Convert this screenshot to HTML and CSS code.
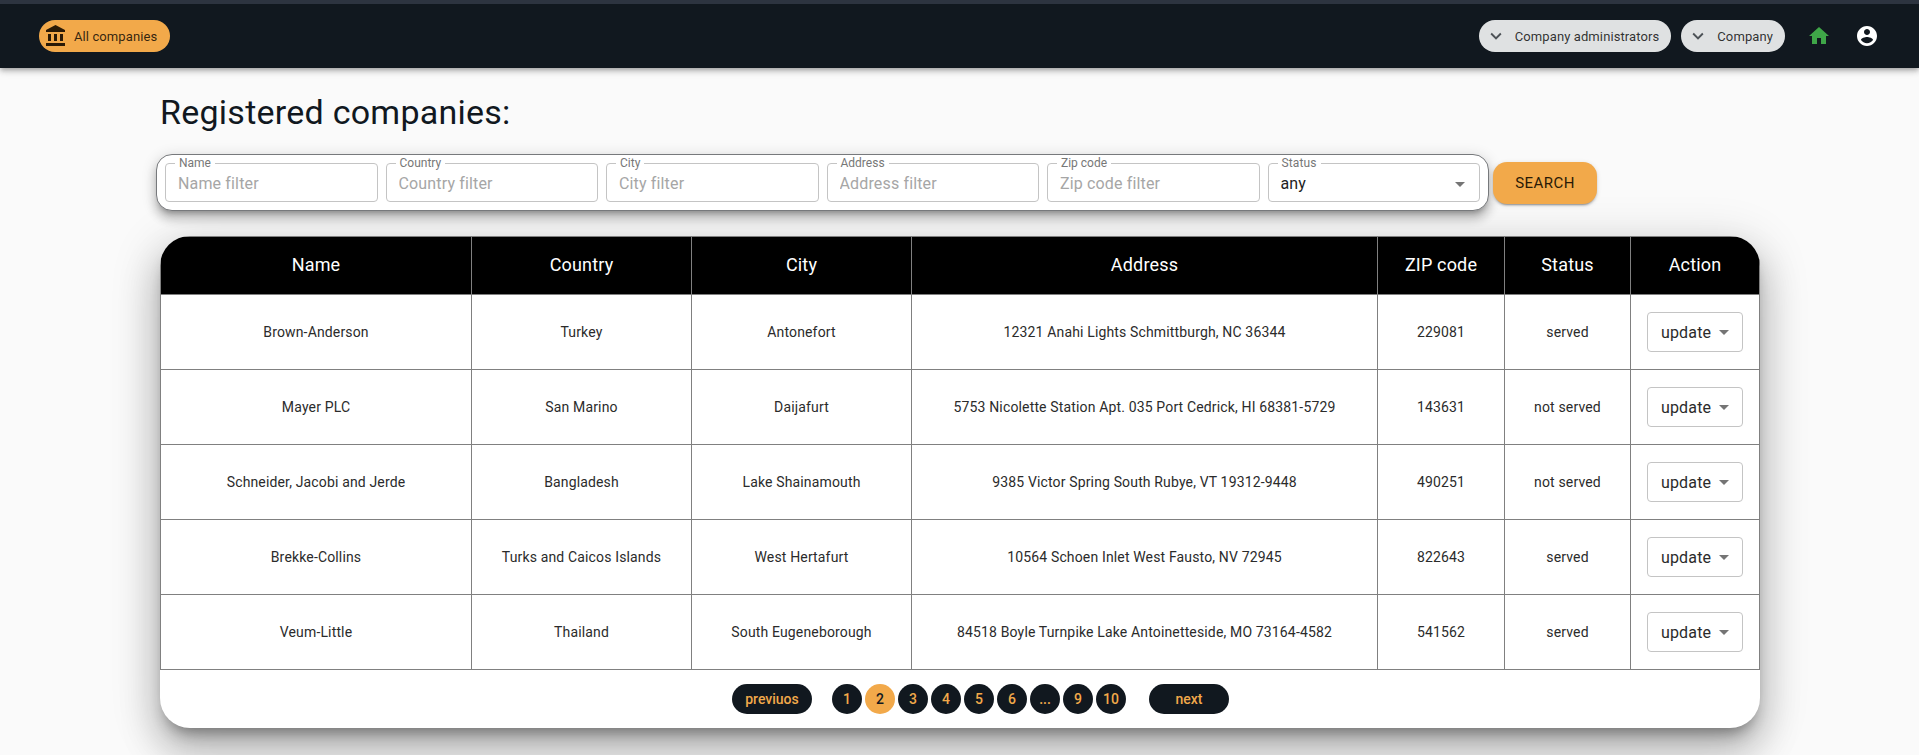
FILE: index.html
```html
<!DOCTYPE html>
<html lang="en">
<head>
    <meta charset="UTF-8">
    <meta name="viewport" content="width=device-width, initial-scale=1.0">
    <title>Registered companies</title>
    <link rel="stylesheet" href="styles.css">
</head>
<body>
    <header class="topbar">
        <a class="chip chip-orange">
            <svg class="chip-bank" viewBox="0 0 24 24"><path d="M4 10v7h3v-7H4zm6 0v7h3v-7h-3zM2 22h19v-3H2v3zm14-12v7h3v-7h-3zm-4.5-9L2 6v2h19V6l-9.5-5z"/></svg>
            <span>All companies</span>
        </a>
        <div class="topbar-right">
            <a class="chip chip-grey">
                <svg class="chip-arrow" viewBox="0 0 24 24"><path d="M16.59 8.59L12 13.17 7.41 8.59 6 10l6 6 6-6z"/></svg>
                <span>Company administrators</span>
            </a>
            <a class="chip chip-grey">
                <svg class="chip-arrow" viewBox="0 0 24 24"><path d="M16.59 8.59L12 13.17 7.41 8.59 6 10l6 6 6-6z"/></svg>
                <span>Company</span>
            </a>
            <svg class="icon-home" viewBox="0 0 24 24"><path d="M10 20v-6h4v6h5v-8h3L12 3 2 12h3v8z"/></svg>
            <svg class="icon-user" viewBox="0 0 24 24"><path d="M12 2C6.48 2 2 6.48 2 12s4.48 10 10 10 10-4.48 10-10S17.52 2 12 2zm0 3c1.66 0 3 1.34 3 3s-1.34 3-3 3-3-1.34-3-3 1.34-3 3-3zm0 14.2c-2.5 0-4.71-1.28-6-3.22.03-1.99 4-3.08 6-3.08 1.99 0 5.97 1.09 6 3.08-1.29 1.94-3.5 3.22-6 3.22z"/></svg>
        </div>
    </header>

    <main class="content">
        <h1>Registered companies:</h1>

        <div class="filters-row">
            <div class="filters">
                <div class="field"><label>Name</label><input type="text" placeholder="Name filter"></div>
                <div class="field"><label>Country</label><input type="text" placeholder="Country filter"></div>
                <div class="field"><label>City</label><input type="text" placeholder="City filter"></div>
                <div class="field"><label>Address</label><input type="text" placeholder="Address filter"></div>
                <div class="field"><label>Zip code</label><input type="text" placeholder="Zip code filter"></div>
                <div class="field field-select">
                    <label>Status</label>
                    <span>any</span>
                    <svg class="drop" viewBox="0 0 24 24"><path d="M7 10l5 5 5-5z"/></svg>
                </div>
            </div>
            <button class="search">Search</button>
        </div>

        <div class="card">
            <table>
                <colgroup>
                    <col class="col-name"><col class="col-country"><col class="col-city"><col class="col-address">
                    <col class="col-zip"><col class="col-status"><col class="col-action">
                </colgroup>
                <thead>
                    <tr><th>Name</th><th>Country</th><th>City</th><th>Address</th><th>ZIP code</th><th>Status</th><th>Action</th></tr>
                </thead>
                <tbody>
                    <tr>
                        <td>Brown-Anderson</td><td>Turkey</td><td>Antonefort</td>
                        <td>12321 Anahi Lights Schmittburgh, NC 36344</td><td>229081</td><td>served</td>
                        <td><div class="update">update <svg class="drop" viewBox="0 0 24 24"><path d="M7 10l5 5 5-5z"/></svg></div></td>
                    </tr>
                    <tr>
                        <td>Mayer PLC</td><td>San Marino</td><td>Daijafurt</td>
                        <td>5753 Nicolette Station Apt. 035 Port Cedrick, HI 68381-5729</td><td>143631</td><td>not served</td>
                        <td><div class="update">update <svg class="drop" viewBox="0 0 24 24"><path d="M7 10l5 5 5-5z"/></svg></div></td>
                    </tr>
                    <tr>
                        <td>Schneider, Jacobi and Jerde</td><td>Bangladesh</td><td>Lake Shainamouth</td>
                        <td>9385 Victor Spring South Rubye, VT 19312-9448</td><td>490251</td><td>not served</td>
                        <td><div class="update">update <svg class="drop" viewBox="0 0 24 24"><path d="M7 10l5 5 5-5z"/></svg></div></td>
                    </tr>
                    <tr>
                        <td>Brekke-Collins</td><td>Turks and Caicos Islands</td><td>West Hertafurt</td>
                        <td>10564 Schoen Inlet West Fausto, NV 72945</td><td>822643</td><td>served</td>
                        <td><div class="update">update <svg class="drop" viewBox="0 0 24 24"><path d="M7 10l5 5 5-5z"/></svg></div></td>
                    </tr>
                    <tr>
                        <td>Veum-Little</td><td>Thailand</td><td>South Eugeneborough</td>
                        <td>84518 Boyle Turnpike Lake Antoinetteside, MO 73164-4582</td><td>541562</td><td>served</td>
                        <td><div class="update">update <svg class="drop" viewBox="0 0 24 24"><path d="M7 10l5 5 5-5z"/></svg></div></td>
                    </tr>
                </tbody>
            </table>

            <div class="pager">
                <a class="page-wide">previuos</a>
                <div class="pages">
                    <a>1</a>
                    <a class="active">2</a>
                    <a>3</a>
                    <a>4</a>
                    <a>5</a>
                    <a>6</a>
                    <a>...</a>
                    <a>9</a>
                    <a>10</a>
                </div>
                <a class="page-wide">next</a>
            </div>
        </div>
    </main>
</body>
</html>
```

FILE: styles.css
```css
* {
    box-sizing: border-box;
}

html, body {
    height: 100%;
}

body {
    margin: 0;
    background-color: #fafafa;
    font-family: Roboto, "Liberation Sans", sans-serif;
    color: #11181f;
    overflow: hidden;
}

/* top bar */
.topbar {
    position: relative;
    height: 68px;
    border-top: 4px solid #2d3440;
    background: #11181f;
    padding: 0 40px 0 39px;
    display: flex;
    align-items: center;
    justify-content: space-between;
    box-shadow: 0 2px 4px -1px rgba(0, 0, 0, 0.2), 0 4px 5px 0 rgba(0, 0, 0, 0.14), 0 1px 10px 0 rgba(0, 0, 0, 0.12);
}

.topbar-right {
    display: flex;
    align-items: center;
}

.chip {
    height: 32px;
    border-radius: 16px;
    display: flex;
    align-items: center;
    font-size: 13px;
    letter-spacing: 0.1px;
    color: rgba(0, 0, 0, 0.8);
}

.chip-orange {
    width: 131px;
    padding-left: 5px;
    background: #f2a94a;
}

.chip-bank {
    width: 24px;
    height: 24px;
    margin-right: 6px;
    fill: #2a1a06;
}

.chip-grey {
    background: #dfe1e2;
    padding: 0 12px 0 6px;
    margin-right: 10px;
}

.chip-arrow {
    width: 22px;
    height: 22px;
    margin-right: 8px;
    fill: #4d5257;
}

.icon-home {
    width: 24px;
    height: 24px;
    margin-left: 12px;
    fill: #3fa648;
}

.icon-user {
    width: 24px;
    height: 24px;
    margin-left: 24px;
    fill: #fff;
}

/* main */
.content {
    width: 1600px;
    margin-left: 160px;
}

h1 {
    margin: 0;
    padding-top: 24px;
    height: 86px;
    font-size: 34px;
    font-weight: 400;
    line-height: 40px;
    letter-spacing: 0.25px;
}

/* filters */
.filters-row {
    display: flex;
    align-items: center;
    margin-left: -4px;
}

.filters {
    width: 1333px;
    height: 57px;
    padding: 8px;
    display: flex;
    gap: 8px;
    background: #fff;
    border: 1px solid #77797c;
    border-radius: 16px;
    box-shadow: 0 5px 5px -3px rgba(0, 0, 0, 0.25), 0 8px 10px 1px rgba(0, 0, 0, 0.16), 0 3px 14px 2px rgba(0, 0, 0, 0.12);
}

.field {
    position: relative;
    flex: none;
    width: 212.5px;
    height: 39px;
    border: 1px solid #c4c4c4;
    border-radius: 4px;
    background: #fff;
}

.field label {
    position: absolute;
    top: -7px;
    left: 9px;
    padding: 0 4px;
    background: #fff;
    font-size: 12px;
    line-height: 12px;
    color: #777;
}

.field input {
    width: 100%;
    height: 100%;
    border: none;
    outline: none;
    background: transparent;
    padding: 2px 12px 0;
    font-family: inherit;
    font-size: 16px;
    letter-spacing: 0.15px;
    color: #222;
}

.field input::placeholder {
    color: #a6a6a6;
    opacity: 1;
}

.field-select {
    display: flex;
    align-items: center;
    justify-content: space-between;
    padding: 2px 7px 0 12px;
    font-size: 16px;
    letter-spacing: 0.15px;
    color: #222;
}

.drop {
    width: 24px;
    height: 24px;
    fill: #757575;
}

.search {
    width: 104px;
    height: 42px;
    margin-left: 4px;
    border: none;
    border-radius: 14px;
    background: #f2a94a;
    color: #2a1a06;
    font-family: inherit;
    font-size: 15px;
    letter-spacing: 0.46px;
    text-transform: uppercase;
    box-shadow: 0 3px 1px -2px rgba(0, 0, 0, 0.2), 0 2px 2px 0 rgba(0, 0, 0, 0.14), 0 1px 5px 0 rgba(0, 0, 0, 0.12);
}

/* table */
.card {
    margin-top: 25px;
    height: 492px;
    background: #fff;
    border-radius: 30px;
    overflow: hidden;
    box-shadow: 0 11px 15px -7px rgba(0, 0, 0, 0.4), 0 24px 38px 3px rgba(0, 0, 0, 0.2), 0 9px 46px 8px rgba(0, 0, 0, 0.12);
}

table {
    width: 1599px;
    table-layout: fixed;
    border-collapse: collapse;
}

.col-name { width: 311px; }
.col-country { width: 220px; }
.col-city { width: 220px; }
.col-address { width: 466px; }
.col-zip { width: 127px; }
.col-status { width: 126px; }
.col-action { width: 129px; }

th, td {
    border: 1px solid #808080;
    text-align: center;
}

th {
    height: 58px;
    background: #000;
    color: #fff;
    font-size: 18px;
    font-weight: 400;
    letter-spacing: 0.17px;
    padding-bottom: 3px;
}

td {
    height: 75px;
    padding-bottom: 2px;
    font-size: 14px;
    letter-spacing: 0.15px;
    color: #2b2b2b;
}

.update {
    width: 96px;
    height: 40px;
    margin: 0 auto;
    padding: 1px 6px 0 13px;
    display: flex;
    align-items: center;
    justify-content: space-between;
    border: 1px solid #c4c4c4;
    border-radius: 4px;
    font-size: 16px;
}

/* pagination */
.pager {
    padding: 14px 0 0 41px;
    display: flex;
    justify-content: center;
}

.pager a {
    height: 30px;
    background: #11181f;
    color: #f2a94a;
    font-size: 14px;
    font-weight: 500;
    display: flex;
    align-items: center;
    justify-content: center;
}

.page-wide {
    width: 80px;
    border-radius: 15px;
}

.pages {
    margin: 0 23px 0 20px;
    display: flex;
    gap: 3px;
}

.pages a {
    width: 30px;
    border-radius: 50%;
}

.pages .active {
    background: #f2a94a;
    color: #11181f;
}
```
